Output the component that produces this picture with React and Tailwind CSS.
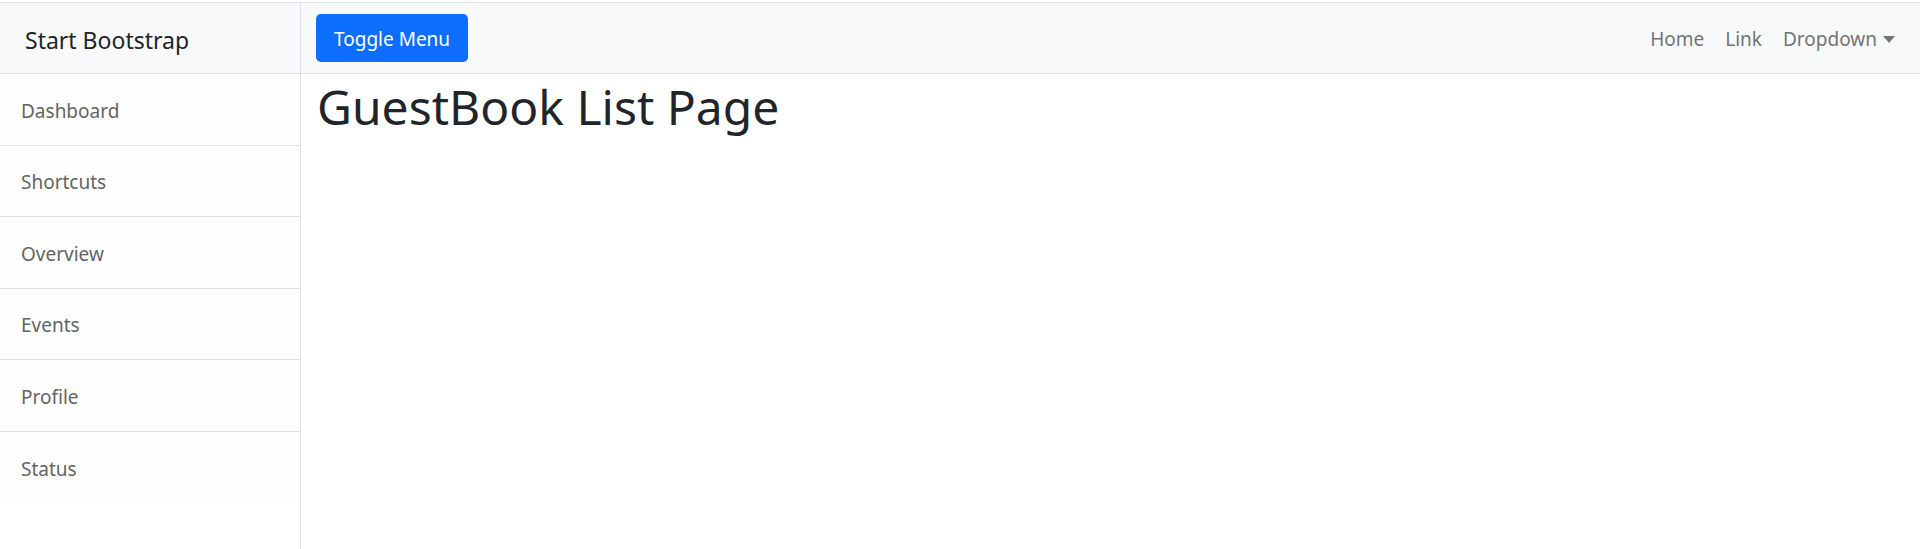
import React from "react";

const menuItems = ["Dashboard", "Shortcuts", "Overview", "Events", "Profile", "Status"];

export default function App() {
  return (
    <div
      className="min-h-[549px] h-[549px] bg-white flex flex-col overflow-hidden"
      style={{ fontFamily: '"Noto Sans", "Open Sans", sans-serif' }}
    >
      <div className="h-[2px] bg-white" />
      <div className="flex flex-1 border-t border-[#dee2e6]">
        {/* sidebar */}
        <div className="w-[301px] shrink-0 border-r border-[#dee2e6] bg-white flex flex-col">
          <div className="h-[71px] bg-[#f8f9fa] border-b border-[#dee2e6] flex items-center pl-[25px] pt-[4px] text-[23px] text-[#212529]">
            Start Bootstrap
          </div>
          <div className="flex flex-col">
            {menuItems.map((item, i) => (
              <a
                key={item}
                href="#"
                className={
                  "h-[71.5px] flex items-center pl-[21px] pt-[3px] text-[19px] text-[#636464] bg-[#fefefe] " +
                  (i < menuItems.length - 1 ? "border-b border-[#dee2e6]" : "")
                }
              >
                {item}
              </a>
            ))}
          </div>
        </div>

        {/* page content */}
        <div className="flex-1 flex flex-col">
          <nav className="h-[71px] bg-[#f8f9fa] border-b border-[#dee2e6] flex items-center justify-between pl-[15px] pr-[25px]">
            <button className="h-[48px] px-[18px] pt-[3px] bg-[#0d6efd] text-white text-[19px] rounded-[5px] mt-[-1px]">
              Toggle Menu
            </button>
            <div className="flex items-center gap-[21px] text-[19px] text-[#737475] pt-[3px]">
              <a href="#">Home</a>
              <a href="#">Link</a>
              <a href="#" className="flex items-center gap-[6px]">
                Dropdown
                <svg width="12" height="7" viewBox="0 0 12 7">
                  <path d="M0 0 L12 0 L6 7 Z" fill="#737475" />
                </svg>
              </a>
            </div>
          </nav>
          <div className="px-[16px] pt-[3px]">
            <h1 className="text-[48px] leading-[60px] text-[#212529] font-normal">
              GuestBook List Page
            </h1>
          </div>
        </div>
      </div>
    </div>
  );
}
